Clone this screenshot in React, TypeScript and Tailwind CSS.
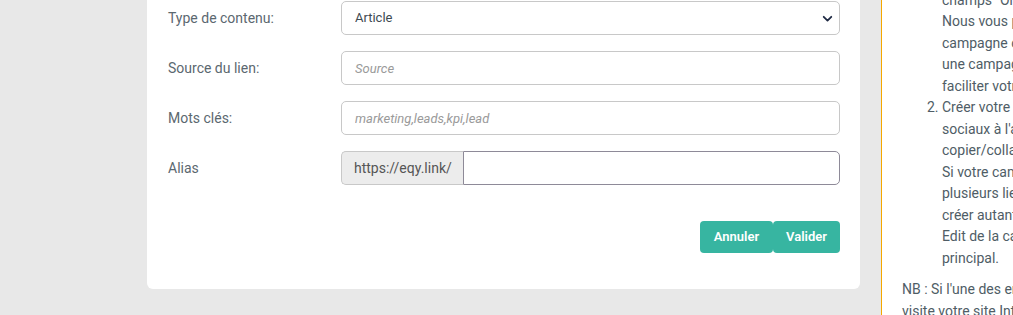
import React from 'react';

const font = { fontFamily: 'Roboto, "Liberation Sans", sans-serif' };

function Chevron() {
  return (
    <svg viewBox="0 0 16 16" className="w-[11px] h-[11px]" fill="none">
      <path d="M2.5 5.5 8 11l5.5-5.5" stroke="#1f2a44" strokeWidth="2.6" strokeLinecap="round" strokeLinejoin="round" />
    </svg>
  );
}

function Row({ label, children }: { label: string; children: React.ReactNode }) {
  return (
    <div className="flex items-center">
      <div className="w-[173px] shrink-0 text-[14px] text-[#5b6870]">{label}</div>
      <div className="flex-1">{children}</div>
    </div>
  );
}

export default function App() {
  return (
    <div style={font} className="w-[1013px] h-[315px] overflow-hidden flex bg-[#e8e8e8]">
      {/* Form card */}
      <div className="ml-[147px] w-[713px] h-[289px] shrink-0 bg-white rounded-b-[6px] pl-[21px] pr-[20px] pt-[1px] flex flex-col">
        <div className="flex flex-col gap-[16px]">
          <Row label="Type de contenu:">
            <div className="relative">
              <select className="appearance-none w-full h-[34px] border border-[#c8c8c8] rounded-[5px] pl-[13px] text-[13px] text-[#3e4a52] bg-white outline-none">
                <option>Article</option>
              </select>
              <span className="absolute right-[7px] top-[12px] pointer-events-none">
                <Chevron />
              </span>
            </div>
          </Row>
          <Row label="Source du lien:">
            <input
              placeholder="Source"
              className="w-full h-[34px] border border-[#c8c8c8] rounded-[5px] px-[13px] text-[13px] placeholder:italic placeholder:text-[#9a9a9a] outline-none"
            />
          </Row>
          <Row label="Mots clés:">
            <input
              placeholder="marketing,leads,kpi,lead"
              className="w-full h-[34px] border border-[#c8c8c8] rounded-[5px] px-[13px] text-[13px] placeholder:italic placeholder:text-[#9a9a9a] outline-none"
            />
          </Row>
          <Row label="Alias">
            <div className="flex h-[34px]">
              <span className="w-[122px] shrink-0 flex items-center pl-[12px] bg-[#ececec] border border-[#c8c8c8] border-r-0 rounded-l-[5px] text-[14px] text-[#555]">
                https://eqy.link/
              </span>
              <input className="flex-1 border border-[#8e8a98] rounded-r-[5px] px-[12px] text-[14px] outline-none" />
            </div>
          </Row>
        </div>

        {/* Actions */}
        <div className="flex justify-end mt-[36px]">
          <button className="w-[73px] h-[32px] bg-[#37b5a1] text-white text-[13px] font-semibold rounded-[4px]">
            Annuler
          </button>
          <button className="w-[67px] h-[32px] bg-[#37b5a1] text-white text-[13px] font-semibold rounded-[4px]">
            Valider
          </button>
        </div>
      </div>

      {/* Help panel */}
      <div className="ml-[21px] w-[320px] shrink-0 bg-white border-l border-[#f5a800] pl-[20px] text-[14px] leading-[21.5px] text-[#4f5d66] whitespace-nowrap">
        <div className="-mt-[75px]">
          <ol className="list-decimal pl-[40px]">
            <li>
              Renseigner les informations de votre
              <br />
              lien en complétant les champs
              <br />
              "Source", "Support" et "Campagne" des
              <br />
              champs "Origine" de votre lien.
              <br />
              Nous vous proposons de nommer la
              <br />
              campagne comme vous le feriez pour
              <br />
              une campagne Google Ads afin de
              <br />
              faciliter votre suivi.
            </li>
            <li>
              Créer votre lien pour les réseaux
              <br />
              sociaux à l'aide de l'outil ou en
              <br />
              copier/collant le lien de votre choix.
              <br />
              Si votre campagne comporte
              <br />
              plusieurs liens, vous pouvez en
              <br />
              créer autant que nécessaire dans
              <br />
              Edit de la campagne du lien
              <br />
              principal.
            </li>
          </ol>
          <p className="mt-[10px]">
            NB : Si l'une des erreurs persiste lors de la
            <br />
            visite votre site Internet, contactez-nous.
          </p>
        </div>
      </div>
    </div>
  );
}
